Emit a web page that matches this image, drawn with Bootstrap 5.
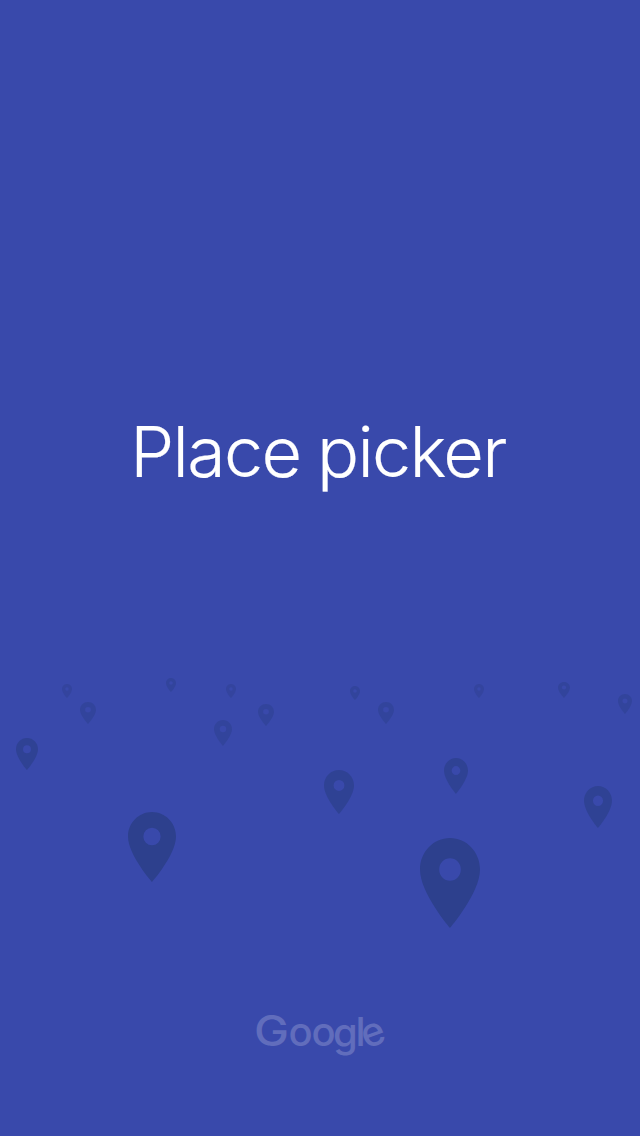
<!DOCTYPE html>
<html lang="en">
<head>
<meta charset="utf-8">
<meta name="viewport" content="width=device-width, initial-scale=1">
<title>Place picker</title>
<link href="https://cdn.jsdelivr.net/npm/bootstrap@5.3.0/dist/css/bootstrap.min.css" rel="stylesheet">
<style>
body { background: #3949ab; font-family: Inter, "Liberation Sans", sans-serif; }
.splash { height: 1136px; }
.splash-title { font-size: 70px; font-weight: 300; line-height: 90px; letter-spacing: -1.65px; word-spacing: -1.5px; padding: 407px 4px 0 0; height: 498px; -webkit-text-stroke: .2px #fff; }
.pin-field { top: 670px; left: 0; width: 640px; height: 270px; color: #2d408d; }
.brand-text { font-size: 40px; font-weight: 500; fill: #616dbc; }
</style>
</head>
<body>
<main class="splash position-relative overflow-hidden d-flex flex-column align-items-center justify-content-between">
  <h1 class="splash-title text-white text-center text-nowrap m-0">Place picker</h1>
  <svg class="pin-field position-absolute" viewBox="0 670 640 270" fill="currentColor" aria-hidden="true">
    <defs>
      <symbol id="pin" viewBox="0 0 60 90" preserveAspectRatio="none">
        <path fill-rule="evenodd" d="M30 0C13.4 0 0 14 0 31.5C0 55 30 90 30 90S60 55 60 31.5C60 14 46.6 0 30 0ZM30 42.7A10.8 11.2 0 1 1 30 20.3A10.8 11.2 0 0 1 30 42.7Z"/>
      </symbol>
    </defs>
    <use href="#pin" x="420" y="838" width="60" height="90"/>
    <use href="#pin" x="128" y="812" width="48" height="70"/>
    <g opacity=".75">
      <use href="#pin" x="324" y="770" width="30" height="44"/>
      <use href="#pin" x="584" y="786" width="28" height="42"/>
      <use href="#pin" x="444" y="758" width="24" height="36"/>
      <use href="#pin" x="16" y="738" width="22" height="32"/>
    </g>
    <g opacity=".5">
      <use href="#pin" x="214" y="720" width="18" height="26"/>
      <use href="#pin" x="258" y="704" width="16" height="22"/>
      <use href="#pin" x="80" y="702" width="16" height="22"/>
      <use href="#pin" x="378" y="702" width="16" height="22"/>
      <use href="#pin" x="618" y="694" width="14" height="20"/>
      <use href="#pin" x="558" y="682" width="12" height="16"/>
      <use href="#pin" x="166" y="678" width="10" height="14"/>
      <use href="#pin" x="350" y="686" width="10" height="14"/>
    </g>
    <g opacity=".4">
      <use href="#pin" x="62" y="684" width="10" height="14"/>
      <use href="#pin" x="226" y="684" width="10" height="14"/>
      <use href="#pin" x="474" y="684" width="10" height="14"/>
    </g>
  </svg>
  <svg class="overflow-visible mb-5" width="150" height="93" viewBox="245 995 150 93" role="img" aria-label="Google">
    <text class="brand-text" y="1046"><tspan x="254" textLength="35" lengthAdjust="spacingAndGlyphs" font-size="42">G</tspan><tspan x="288.500 311.500 333 355.500 366" y="1046 1046 1046.500 1046 1049" rotate="0 0 0 0 -20">oogle</tspan></text>
  </svg>
</main>
<script src="https://cdn.jsdelivr.net/npm/bootstrap@5.3.0/dist/js/bootstrap.bundle.min.js"></script>
</body>
</html>
